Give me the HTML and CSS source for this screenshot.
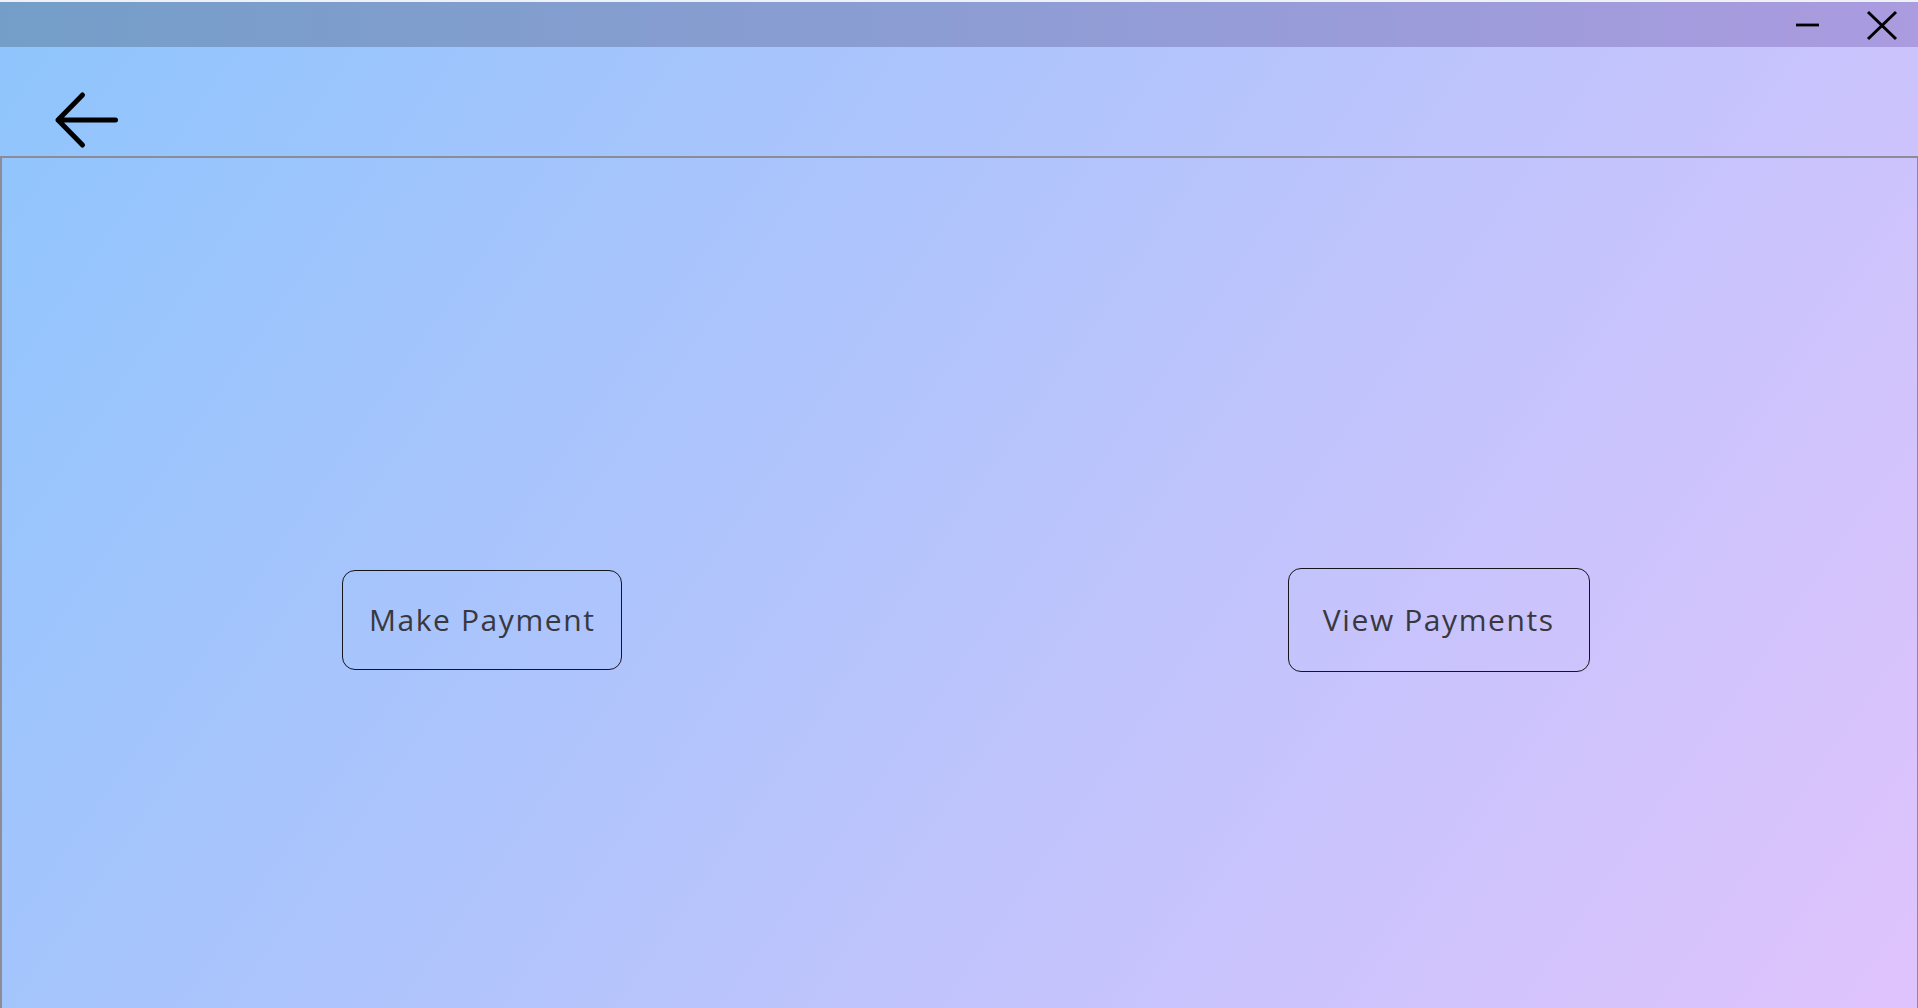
FILE: index.html
```html
<!DOCTYPE html>
<html lang="en">
<head>
<meta charset="utf-8">
<title>Payments</title>
<link rel="stylesheet" href="styles.css">
</head>
<body>
<div class="app">
  <div class="topline"></div>
  <div class="titlebar">
    <svg class="win-btn min" width="28" height="28" viewBox="0 0 28 28"><line x1="2" y1="14" x2="25" y2="14" stroke="#000" stroke-width="2.8"/></svg>
    <svg class="win-btn close" width="32" height="32" viewBox="0 0 32 32"><path d="M2 3 L30 30 M30 3 L2 30" stroke="#000" stroke-width="3" fill="none"/></svg>
  </div>
  <div class="header">
    <svg class="back" width="72" height="66" viewBox="0 0 72 66"><path d="M63.5 33 H6 M30.5 8 L6 33 L30.5 58" stroke="#000" stroke-width="5" fill="none" stroke-linecap="round" stroke-linejoin="round"/></svg>
  </div>
  <div class="content">
    <div class="col"><button class="btn btn-make">Make Payment</button></div>
    <div class="col"><button class="btn btn-view">View Payments</button></div>
  </div>
</div>
</body>
</html>
```
FILE: styles.css
```css
html, body {
  margin: 0;
  padding: 0;
  height: 100%;
  overflow: hidden;
}
body {
  background: linear-gradient(125deg, #8ec5fc 0%, #e0c3fc 100%);
  font-family: "Open Sans", "Liberation Sans", sans-serif;
}
.app {
  display: flex;
  flex-direction: column;
  height: 100vh;
}
.topline {
  height: 2px;
  background: #eef1f6;
}
.titlebar {
  height: 45px;
  display: flex;
  align-items: center;
  justify-content: flex-end;
  gap: 44px;
  padding-right: 20px;
  background: linear-gradient(90deg, #749ec8 0%, #8d9dd4 50%, #ab9be0 100%);
}
.win-btn {
  display: block;
}
.header {
  height: 109px;
  padding-left: 52px;
  padding-top: 40px;
  box-sizing: border-box;
}
.back {
  display: block;
}
.content {
  flex: 1;
  border: 2px solid #8c8c96;
  border-right-width: 1px;
  border-bottom: none;
  display: grid;
  grid-template-columns: 1fr 1fr;
  align-items: start;
  padding-top: 410px;
  padding-left: 2px;
}
.col {
  display: flex;
  justify-content: center;
  align-items: center;
  height: 104px;
}
.btn {
  background: transparent;
  border: 1.7px solid #15151c;
  border-radius: 13px;
  font-family: "Open Sans", "Liberation Sans", sans-serif;
  font-size: 30px;
  letter-spacing: 1.6px;
  color: #38383e;
  padding: 0 0 2px 0;
  box-sizing: border-box;
}
.btn-make {
  width: 280px;
  height: 100px;
}
.btn-view {
  width: 302px;
  height: 104px;
}
```
